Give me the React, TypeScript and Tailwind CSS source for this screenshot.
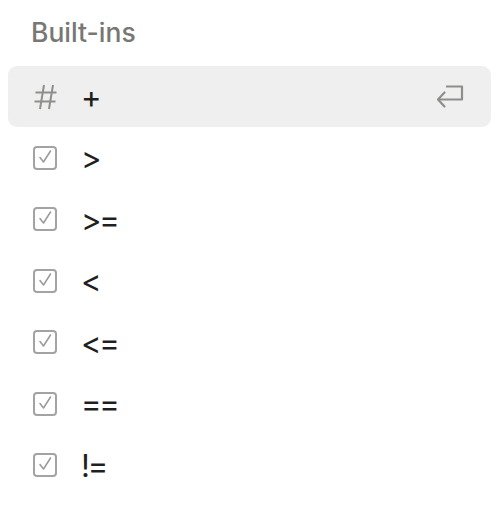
const items = [">", ">=", "<", "<=", "==", "!="];

const CheckIcon = () => (
  <svg width="24" height="24" viewBox="0 0 24 24" fill="none">
    <rect x="1" y="1" width="22" height="22" rx="3" stroke="#a3a3a1" strokeWidth="2" />
    <path d="M7 11.5l3.5 4.5 7-11" stroke="#9a9997" strokeWidth="1.5" strokeLinecap="round" strokeLinejoin="round" />
  </svg>
);

const HashIcon = () => (
  <svg width="25" height="26" viewBox="0 0 25 26" fill="none">
    <path d="M11 1L7 25M20 1l-4 24M2.5 8.5h21M1.5 17.5h21" stroke="#8f8e8b" strokeWidth="2" />
  </svg>
);

const ReturnIcon = () => (
  <svg width="30" height="26" viewBox="0 0 30 26" fill="none">
    <path d="M11 2.5h16v13H3" stroke="#8f8e8b" strokeWidth="2.2" strokeLinejoin="round" />
    <path d="M9.5 8.5L3 15.5l6.5 7" stroke="#8f8e8b" strokeWidth="2.2" strokeLinecap="round" strokeLinejoin="round" />
  </svg>
);

export default function App() {
  return (
    <div className="min-h-[505px] w-[499px] bg-white px-2 pt-[16px] font-['Inter',sans-serif]">
      <div className="px-[23px] pb-[18px] text-[26.5px] font-medium leading-[32px] text-[#787774]">Built-ins</div>
      <div className="flex flex-col">
        <div className="flex h-[61px] items-center rounded-[9px] bg-[#efefef] pl-[25px] pr-[26px]">
          <span className="w-[48px]">
            <HashIcon />
          </span>
          <span className="flex-1 text-[31px] leading-none tracking-[-0.07em] text-[#1f1f1f]">+</span>
          <ReturnIcon />
        </div>
        {items.map((op) => (
          <div className="flex h-[61.5px] items-center pl-[25px]" key={op}>
            <span className="w-[48px]">
              <CheckIcon />
            </span>
            <span className="text-[31px] leading-none tracking-[-0.07em] text-[#1f1f1f]">{op}</span>
          </div>
        ))}
      </div>
    </div>
  );
}
